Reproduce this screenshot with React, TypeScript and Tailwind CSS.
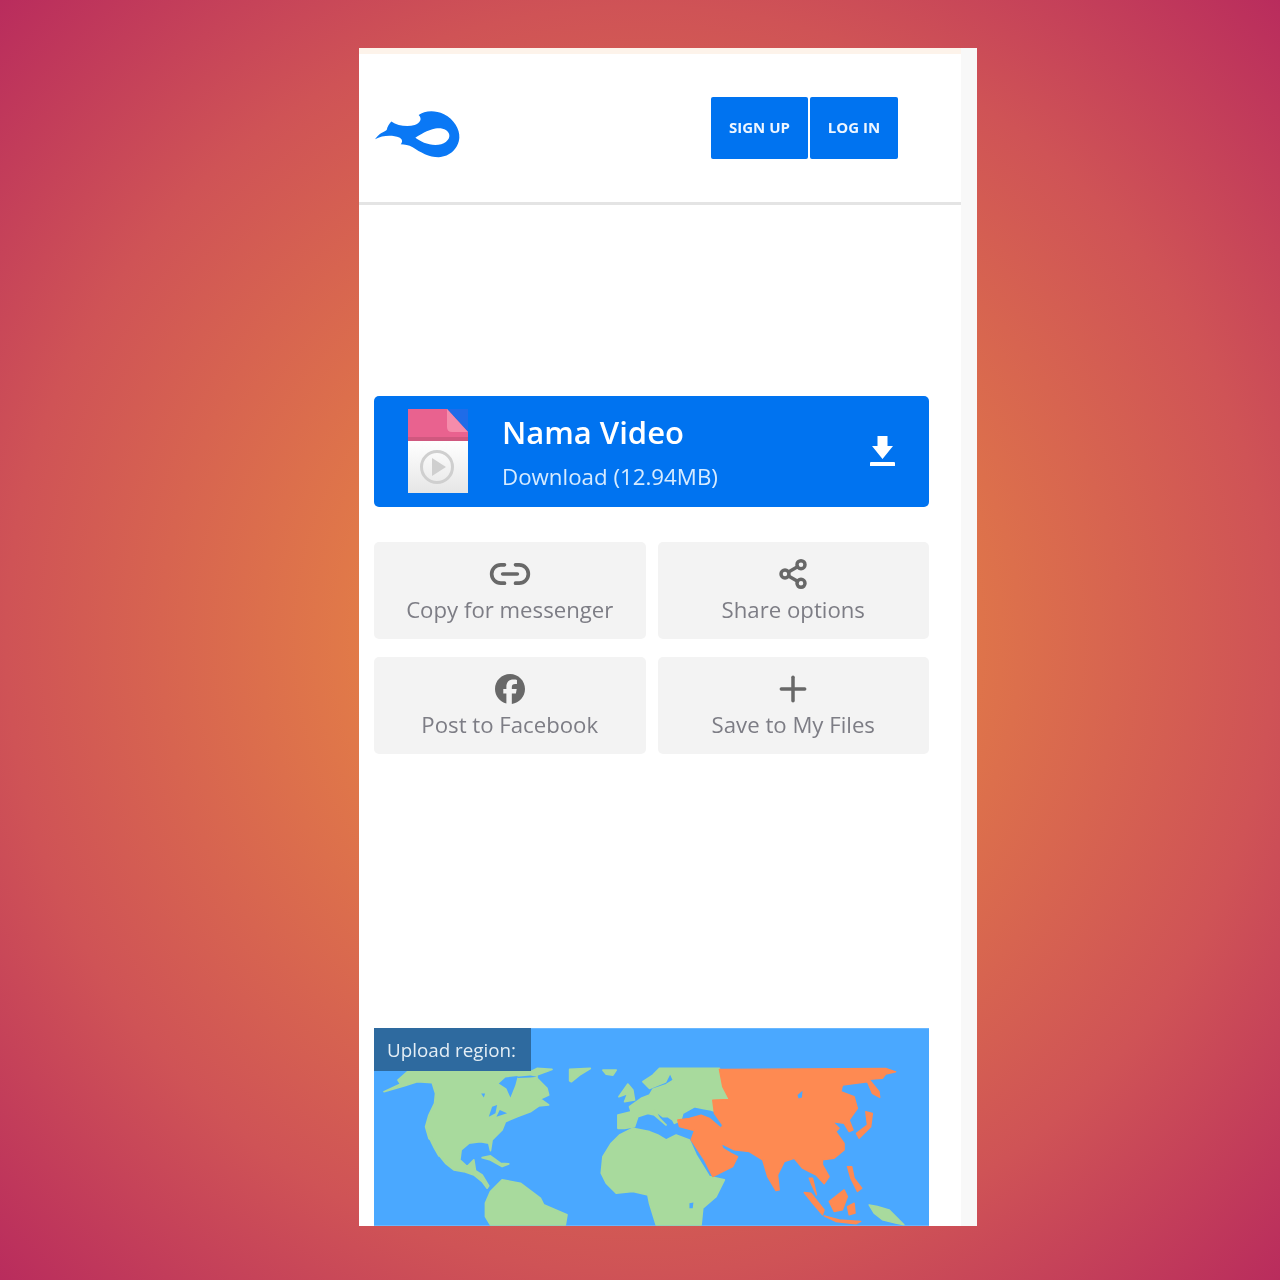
import { Link2, Share2, Plus } from "lucide-react";
import { FaFacebook } from "react-icons/fa6";

const actions = [
  { icon: <Link2 size={44} strokeWidth={2} />, label: "Copy for messenger" },
  { icon: <Share2 size={32} strokeWidth={2.6} />, label: "Share options" },
  { icon: <FaFacebook size={30} />, label: "Post to Facebook" },
  { icon: <Plus size={40} strokeWidth={2.1} />, label: "Save to My Files" },
];

function Logo() {
  return (
    <svg viewBox="0 0 300 182" preserveAspectRatio="none" className="w-[100px] h-[65px] shrink-0">
      <path
        fill="#0a78f5"
        fillRule="evenodd"
        d="M15 110 C28 92 42 90 50 84 C52 74 58 66 64 60 C82 72 112 76 134 70 C150 64 158 54 146 42 C162 32 190 26 222 40 C252 54 270 82 268 106 C266 134 240 160 206 160 C178 160 150 146 128 132 C116 126 104 124 92 124 C98 118 98 110 88 105 C68 98 38 98 15 110 Z M136 106 C150 116 172 126 196 126 C222 126 240 112 238 98 C236 84 216 76 196 80 C172 84 150 98 136 106 Z"
      />
    </svg>
  );
}

function FileIcon() {
  return (
    <svg viewBox="0 0 60 84" className="w-[60px] h-[84px] shrink-0">
      <defs>
        <linearGradient id="filebody" x1="0" y1="0" x2="0" y2="1">
          <stop offset="0" stopColor="#ffffff" />
          <stop offset="1" stopColor="#e6e6e6" />
        </linearGradient>
      </defs>
      <path d="M39 0H60V23Z" fill="#1f6ce8" />
      <path d="M0 0H39L60 23V32H0Z" fill="#e9628f" />
      <rect y="28" width="60" height="4" fill="#d0587f" />
      <rect y="32" width="60" height="52" fill="url(#filebody)" />
      <path d="M39 0L60 23H44Q39 23 39 18Z" fill="#f58cab" />
      <circle cx="29" cy="58" r="15.5" fill="none" stroke="#cfcfcf" strokeWidth="3" />
      <path d="M24 49L38 58L24 67Z" fill="#cfcfcf" />
    </svg>
  );
}

function WorldMap() {
  return (
    <svg viewBox="374 1028 556 198" className="block w-full h-[198px]">
      <rect x="374" y="1028" width="556" height="198" fill="#4aa8ff" />
      {/* americas */}
      <g transform="translate(374 1060) scale(0.3333)" fill="#a8da9d" stroke="#a8da9d" strokeWidth="5" strokeLinejoin="round">
        <path d="M100 35 L72 60 L80 72 L30 95 L90 78 L130 65 L175 68 L185 100 L182 130 L165 165 L155 200 L165 235 L190 260 L195 285 L215 310 L240 330 L270 335 L300 345 L325 365 L340 385 L345 378 L325 345 L305 332 L300 300 L280 320 L258 300 L262 270 L285 250 L320 245 L345 250 L350 272 L355 240 L385 210 L395 185 L430 170 L470 155 L495 138 L525 135 L505 120 L470 130 L525 105 L520 85 L490 55 L490 45 L535 28 L490 25 L470 35 Z" />
        <path d="M170 232 L180 240 L195 288 L182 265 L172 245 Z" />
        <path d="M325 293 L350 288 L380 310 L405 312 L385 320 L350 300 Z" />
        <path d="M350 495 L335 470 L335 430 L350 395 L385 360 L440 370 L500 415 L510 435 L580 465 L575 495 Z" />
        <g fill="#4aa8ff" stroke="none">
          <path d="M375 70 L395 52 L432 48 L425 75 L410 112 L398 85 Z" />
          <path d="M345 170 L355 140 L370 135 L365 160 Z M368 170 L378 150 L400 160 Z M322 100 L334 100 L330 112 Z" />
          <path d="M430 50 L470 46 L490 50 L470 52 L432 54 Z" />
        </g>
      </g>
      {/* europe, africa */}
      <g transform="translate(570 1060) scale(0.3333)" fill="#a8da9d" stroke="#a8da9d" strokeWidth="5" strokeLinejoin="round">
        <path d="M0 28 L62 25 L30 45 L5 65 L0 62 Z" />
        <path d="M100 30 L140 30 L130 45 L110 42 Z" />
        <path d="M220 65 L250 45 L270 25 L450 25 L465 90 L475 115 L435 122 L440 155 L425 150 L400 145 L375 140 L340 160 L335 178 L325 185 L315 190 L310 180 L295 170 L280 170 L255 150 L270 175 L290 195 L255 165 L235 160 L205 170 L195 200 L165 205 L145 205 L145 165 L185 155 L180 140 L215 115 L240 105 L250 88 L290 74 L312 60 L302 38 L288 66 L240 85 Z" />
        <path d="M148 110 L175 72 L190 90 L195 120 L165 125 L175 100 Z" />
        <path d="M95 340 L100 290 L125 250 L150 225 L190 205 L240 215 L265 225 L290 240 L320 225 L360 240 L380 285 L420 350 L465 360 L440 410 L400 445 L395 495 L260 495 L240 430 L235 405 L190 395 L140 400 L110 370 Z" />
        <path d="M360 430 L372 428 L370 445 L360 445 Z" fill="#4aa8ff" stroke="none" />
      </g>
      {/* asia */}
      <g transform="translate(670 1060) scale(0.3333)" fill="#fe8a52" stroke="#fe8a52" strokeWidth="4" strokeLinejoin="round">
        <path d="M150 28 L650 25 L680 35 L650 42 L640 55 L600 58 L630 95 L632 112 L610 100 L595 65 L560 70 L520 75 L515 95 L555 110 L565 145 L540 180 L552 210 L540 215 L525 190 L490 185 L510 205 L500 215 L525 250 L525 270 L495 295 L460 300 L460 315 L480 350 L465 372 L440 345 L420 335 L400 325 L375 295 L345 305 L325 345 L330 390 L320 392 L295 350 L280 300 L240 275 L195 270 L155 250 L160 265 L185 280 L205 290 L190 320 L130 350 L105 300 L65 240 L75 212 L30 200 L25 180 L60 175 L95 165 L120 175 L155 205 L160 195 L135 160 L130 120 L180 118 L160 80 Z" />
        <path d="M420 355 L430 355 L442 405 L428 375 Z" />
        <path d="M405 398 L425 400 L465 450 L460 465 L430 430 Z" />
        <path d="M465 468 L510 480 L575 485 L560 492 L500 485 Z" />
        <path d="M480 425 L525 390 L535 410 L520 450 L495 455 Z" />
        <path d="M535 440 L555 430 L558 460 L540 465 Z" />
        <path d="M535 320 L548 320 L555 355 L578 385 L565 395 L545 355 Z" />
        <path d="M590 155 L610 160 L605 200 L570 235 L562 220 L595 195 Z" />
        <path d="M600 435 L625 440 L660 450 L705 495 L680 490 L640 480 L615 460 Z" fill="#a8da9d" stroke="#a8da9d" />
        <path d="M385 105 L400 92 L398 112 L388 115 Z" fill="#4aa8ff" stroke="none" />
      </g>
    </svg>
  );
}

export default function App() {
  return (
    <div className="h-[1280px] pt-[48px] bg-[radial-gradient(circle_at_center,#ec8a3c_0%,#e48046_25%,#cf5356_70%,#b92c5d_100%)] font-['Open_Sans',sans-serif]">
      <div className="w-[618px] h-[1178px] ml-[359px] flex overflow-hidden bg-[#f8f8f8]">
        <div className="w-[602px] h-full bg-white shrink-0 blur-[0.5px]">
          <div className="h-[6px] bg-[#fdf3ea]" />

          {/* header */}
          <header className="h-[151px] flex justify-between pl-[11px] pr-[63px] border-b-[3px] border-[#e4e4e4]">
            <div className="pt-[46px]">
              <Logo />
            </div>
            <div className="flex gap-[2px] pt-[43px]">
              <a className="w-[97px] h-[62px] flex items-center justify-center pb-[1px] bg-[#0073f0] rounded-[2px] text-[#eef6ff] text-[15px] font-bold">
                SIGN UP
              </a>
              <a className="w-[88px] h-[62px] flex items-center justify-center pb-[1px] bg-[#0073f0] rounded-[2px] text-[#eef6ff] text-[15px] font-bold">
                LOG IN
              </a>
            </div>
          </header>

          <div className="pl-[15px] pr-[32px]">
            {/* download */}
            <div className="mt-[191px] h-[111px] rounded-[5px] bg-[#0073f0] flex items-center pl-[34px] pr-[34px] text-white">
              <span className="mb-[2px]">
                <FileIcon />
              </span>
              <div className="ml-[35px] flex-1">
                <div className="text-[31px] font-semibold leading-[42px] -ml-[1px] -mt-[1px]">Nama Video</div>
                <div className="text-[22.3px] leading-[30px] mt-[9px] -ml-[1px] text-[#d6ebff]">Download (12.94MB)</div>
              </div>
              <svg viewBox="0 0 25 30" className="w-[25px] h-[30px] mb-[2px]" fill="#ffffff">
                <path d="M7.5 0H17.5V10H23L12.5 23L2 10H7.5Z" />
                <rect y="26" width="25" height="4.5" rx="1" />
              </svg>
            </div>

            {/* actions */}
            <div className="mt-[35px] grid grid-cols-2 gap-x-[12px] gap-y-[18px]">
              {actions.map((action) => (
                <button
                  key={action.label}
                  className="h-[97px] pt-[17px] rounded-[5px] bg-[#f3f3f3] flex flex-col items-center"
                >
                  <span className="h-[30px] flex items-center justify-center text-[#686868]">{action.icon}</span>
                  <span className="mt-[6px] text-[22.2px] leading-[30px] text-[#7d7d85]">{action.label}</span>
                </button>
              ))}
            </div>

            {/* map */}
            <div className="relative mt-[274px]">
              <WorldMap />
              <div className="absolute left-0 top-0 w-[157px] h-[43px] bg-[#2e6a9f] text-[#e4eef5] text-[18.8px] leading-[44px] pl-[13px]">
                Upload region:
              </div>
            </div>
          </div>
        </div>
      </div>
    </div>
  );
}
